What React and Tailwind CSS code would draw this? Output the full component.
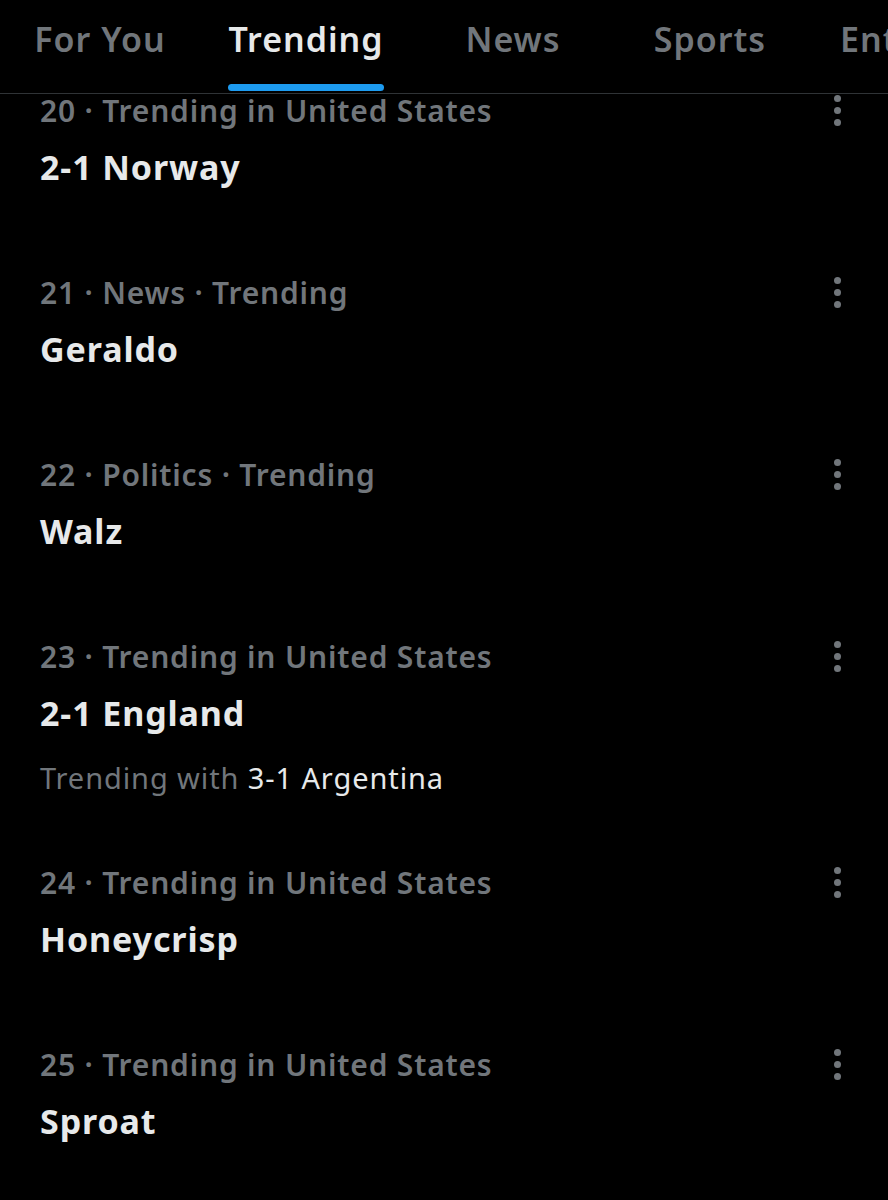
import React from 'react';

const TABS = [
  { label: 'For You', w: 'w-[200px]' },
  { label: 'Trending', w: 'w-[212px]', active: true },
  { label: 'News', w: 'w-[202px]' },
  { label: 'Sports', w: 'w-[192px]' },
];

const TRENDS = [
  { rank: 20, meta: 'Trending in United States', title: '2-1 Norway' },
  { rank: 21, meta: 'News · Trending', title: 'Geraldo' },
  { rank: 22, meta: 'Politics · Trending', title: 'Walz' },
  { rank: 23, meta: 'Trending in United States', title: '2-1 England', with: '3-1 Argentina' },
  { rank: 24, meta: 'Trending in United States', title: 'Honeycrisp' },
  { rank: 25, meta: 'Trending in United States', title: 'Sproat' },
];

const MoreDots = () => (
  <div className="flex flex-col items-center gap-[5px] w-[7px]">
    <span className="w-[7px] h-[7px] rounded-full bg-[#71767b]" />
    <span className="w-[7px] h-[7px] rounded-full bg-[#71767b]" />
    <span className="w-[7px] h-[7px] rounded-full bg-[#71767b]" />
  </div>
);

const TrendRow = ({ trend }) => (
  <div className={`flex justify-between pl-[40px] pr-[47px] ${trend.with ? 'pb-[64px]' : 'pb-[83px]'}`}>
    <div className="flex flex-col">
      <div className="h-[40px] flex items-center text-[30px] font-semibold text-[#71767b] tracking-[0.8px]">
        {trend.rank} · {trend.meta}
      </div>
      <div className="h-[44px] mt-[15px] flex items-center text-[34px] font-bold text-[#e7e9ea] tracking-[0.9px]">
        {trend.title}
      </div>
      {trend.with && (
        <div className="h-[40px] mt-[23px] flex items-center text-[29px] text-[#71767b] tracking-[0.9px]">
          Trending with&nbsp;<span className="text-[#e7e9ea]">{trend.with}</span>
        </div>
      )}
    </div>
    <div className="h-[40px] flex items-center">
      <MoreDots />
    </div>
  </div>
);

export default function App() {
  return (
    <div className="w-[888px] h-[1200px] overflow-hidden bg-black font-['Noto_Sans',sans-serif]">
      <header className="h-[94px] border-b border-[#2f3336] flex items-start overflow-hidden whitespace-nowrap">
        {TABS.map((tab) => (
          <div key={tab.label} className={`${tab.w} shrink-0 flex flex-col items-center pt-[16px]`}>
            <div className="relative">
              <span
                className={`block h-[46px] leading-[46px] text-[34px] font-semibold tracking-[1px] ${
                  tab.active ? 'text-[#e7e9ea]' : 'text-[#71767b]'
                }`}
              >
                {tab.label}
              </span>
              {tab.active && <div className="mt-[22px] h-[7px] rounded-full bg-[#1d9bf0]" />}
            </div>
          </div>
        ))}
        <div className="shrink-0 w-[82px] overflow-hidden pl-[34px] pt-[16px] h-[46px] leading-[46px] text-[34px] font-semibold tracking-[1px] text-[#71767b] box-content">
          Ent
        </div>
      </header>

      <main className="-mt-[4px]">
        {TRENDS.map((t) => (
          <TrendRow key={t.rank} trend={t} />
        ))}
      </main>
    </div>
  );
}
